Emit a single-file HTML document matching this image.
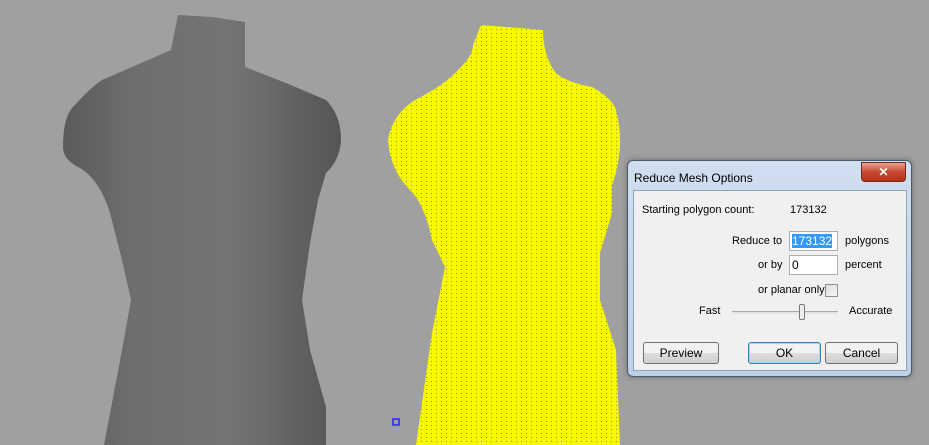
<!DOCTYPE html>
<html><head><style>
body{margin:0;width:929px;height:445px;overflow:hidden;background:#a0a0a0;font-family:"Liberation Sans",sans-serif;font-size:11px;position:relative}
.dlg{position:absolute;left:627px;top:160px;width:285px;height:217px;background:linear-gradient(#cfdff0,#bcd0e6);border:1px solid #4a5a6c;border-radius:6px;box-sizing:border-box;box-shadow:0 0 6px rgba(0,0,0,.35)}
.title{position:absolute;left:634px;top:171px;font-size:12px;color:#000}
.close{position:absolute;left:861px;top:162px;width:45px;height:20px;border-radius:0 0 4px 4px;background:linear-gradient(#e8a190,#c94a31 50%,#b43018);border:1px solid #6e2a1e;box-sizing:border-box;color:#fff;font-weight:bold;text-align:center;line-height:18px;font-size:12px}
.client{position:absolute;left:633px;top:190px;width:274px;height:181px;background:#f0f0f0;border:1px solid #8fa3b8;box-sizing:border-box}
.t{position:absolute;white-space:nowrap;color:#000}
.inp{position:absolute;width:49px;height:20px;background:#fff;border:1px solid #abadb3;box-sizing:border-box;padding:1px 2px;line-height:16px;font-size:12px}
.btn{position:absolute;height:22px;border:1px solid #707070;border-radius:3px;box-sizing:border-box;background:linear-gradient(#f2f2f2 50%,#dddddd 50%,#cfcfcf);text-align:center;line-height:20px;font-size:12px}
</style></head><body>
<svg width="929" height="445" style="position:absolute;left:0;top:0">
<defs>
<linearGradient id="g" x1="0" x2="1"><stop offset="0" stop-color="#5a5a5a"/><stop offset=".25" stop-color="#6e6e6e"/><stop offset=".6" stop-color="#747474"/><stop offset="1" stop-color="#555"/></linearGradient>
<pattern id="d" width="5" height="4" patternUnits="userSpaceOnUse"><rect width="5" height="4" fill="#f8f800"/><rect x="1" y="1" width="1" height="1" fill="#8a8a8a"/></pattern>
</defs>
<path d="M178 15 L212 17 L245 22 L245 67 L286 83 L326 100 Q341 115 341 140 Q340 160 326 173 L318 200 L310 243 L302 300 L310 350 L326 407 L326 445 L104 445 L122 350 L131 300 L122 260 L110 213 Q100 180 80 168 Q63 160 63 147 Q63 115 75 105 Q90 88 102 80 L171 50 Z" fill="url(#g)"/>
<path d="M481 25 L543 30 Q543 55 555 72 Q565 82 592 87 Q612 98 616 110 Q621 130 620 147 Q618 170 612 185 L612 213 L600 253 L600 300 L616 350 L620 445 L416 445 L432 333 L445 267 L432 240 Q425 205 410 190 Q390 170 388 140 Q392 115 415 100 Q445 85 460 68 Q473 55 473 45 Z" fill="url(#d)"/>
<rect x="393" y="419" width="6" height="6" fill="none" stroke="#22f" stroke-width="1.5"/>
</svg>
<div class="dlg"></div>
<div class="title">Reduce Mesh Options</div>
<div class="close">✕</div>
<div class="client"></div>
<div class="t" style="left:642px;top:204px">Starting polygon count:</div>
<div class="t" style="left:790px;top:204px">173132</div>
<div class="t" style="left:732px;top:235px">Reduce to</div>
<div class="inp" style="left:789px;top:231px"><span style="background:#3399ff;color:#fff">173132</span></div>
<div class="t" style="left:845px;top:235px">polygons</div>
<div class="t" style="left:758px;top:259px">or by</div>
<div class="inp" style="left:789px;top:255px">0</div>
<div class="t" style="left:845px;top:259px">percent</div>
<div class="t" style="left:758px;top:284px">or planar only</div>
<div style="position:absolute;left:825px;top:284px;width:11px;height:11px;border:1px solid #8f8f8f;background:linear-gradient(135deg,#ddd,#f6f6f6)"></div>
<div class="t" style="left:699px;top:305px">Fast</div>
<div style="position:absolute;left:732px;top:311px;width:106px;height:2px;background:#e4e4e4;border-top:1px solid #aaa"></div>
<div style="position:absolute;left:799px;top:304px;width:4px;height:14px;border:1px solid #777;border-radius:2px;background:#eee"></div>
<div class="t" style="left:849px;top:305px">Accurate</div>
<div class="btn" style="left:643px;top:342px;width:76px">Preview</div>
<div class="btn" style="left:748px;top:342px;width:73px;border-color:#3c7fb1;box-shadow:inset 0 0 0 1px #9cd6f5">OK</div>
<div class="btn" style="left:825px;top:342px;width:73px">Cancel</div>
</body></html>
